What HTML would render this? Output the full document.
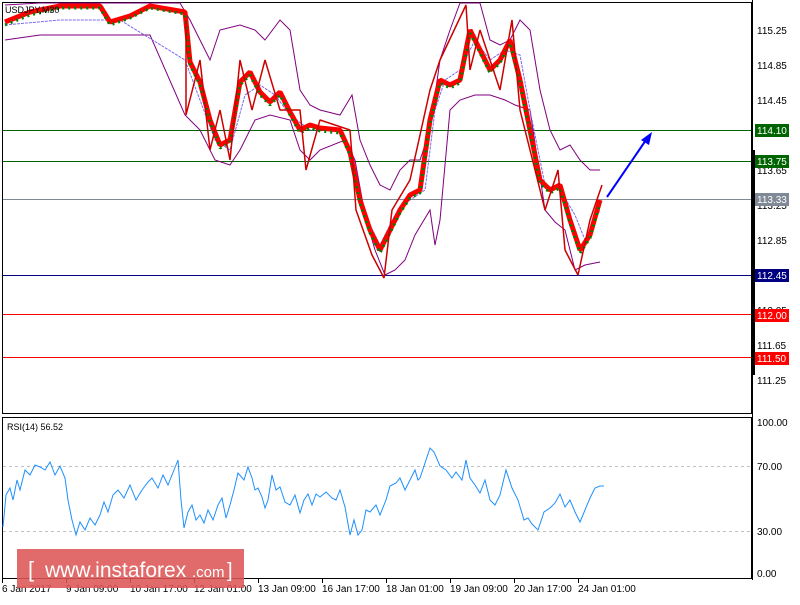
<!DOCTYPE html>
<html><head><meta charset="utf-8"><style>
body{margin:0;width:800px;height:600px;background:#fff;overflow:hidden;font-family:"Liberation Sans",sans-serif}
svg text{font-family:"Liberation Sans",sans-serif}
</style></head><body>
<svg width="800" height="600" viewBox="0 0 800 600" xmlns="http://www.w3.org/2000/svg">
<rect x="2.5" y="2.5" width="749" height="411" fill="#fff" stroke="#000"/>
<rect x="2.5" y="417.5" width="749" height="161" fill="#fff" stroke="#000"/>
<g shape-rendering="crispEdges">
<rect x="3" y="130" width="748" height="1" fill="#006400"/>
<rect x="3" y="161" width="748" height="1" fill="#006400"/>
<rect x="3" y="199" width="748" height="1" fill="#7f8a96"/>
<rect x="3" y="275" width="748" height="1" fill="#000080"/>
<rect x="3" y="314" width="748" height="1" fill="#ff0000"/>
<rect x="3" y="357" width="748" height="1" fill="#ff0000"/>
</g>
<polyline fill="none" stroke="#800080" points="5,5 40,3 100,3 150,3 180,3 190,20 200,40 210,60 220,30 240,25 255,30 265,40 280,20 290,30 300,90 310,105 320,110 340,115 352,95 360,140 370,165 380,185 390,190 400,170 410,160 420,160 430,130 440,60 450,30 460,3 480,3 490,40 500,45 510,40 520,20 530,30 540,90 550,130 560,150 570,145 580,160 590,170 600,170"/>
<polyline fill="none" stroke="#800080" points="5,40 40,35 100,35 150,35 185,115 200,130 215,160 230,165 240,150 255,120 270,115 290,120 300,150 310,160 320,150 345,140 355,160 365,215 375,250 385,275 395,270 405,260 415,235 430,210 435,245 440,220 450,110 460,100 475,95 490,95 505,100 515,105 530,110 545,210 555,222 565,230 575,270 585,265 600,262"/>
<polyline fill="none" stroke="#7b68ee" stroke-dasharray="3,1" points="5,25 60,20 120,20 185,60 200,100 215,140 230,150 245,95 260,85 275,95 290,115 310,130 340,130 355,170 365,215 380,245 395,215 410,200 425,190 435,110 445,80 460,70 475,40 490,60 505,50 520,55 530,110 545,185 560,190 575,215 585,240 600,210"/>
<g fill="none" stroke-linejoin="bevel">
<polyline stroke="#ff0000" stroke-width="5" points="5,22 30,12 60,6 100,6 110,22 130,16 150,6 185,12 190,62 200,82 210,120 220,145 230,140 240,82 250,72 260,92 270,102 280,92 290,112 300,130 310,125 320,128 340,130 350,152 360,200 370,230 380,250 390,230 400,210 410,195 420,190 430,120 440,80 450,85 460,80 470,30 480,50 490,70 500,60 510,40 520,80 530,130 540,180 550,190 560,185 570,220 580,250 590,235 600,200"/>
<polyline stroke="#008000" stroke-width="3" stroke-dasharray="2,4" points="5,25 30,15 60,8 100,8 110,25 130,18 150,8 185,14 190,65 200,85 210,122 220,148 230,143 240,85 250,75 260,95 270,105 280,95 290,115 300,133 310,128 320,131 340,133 350,155 360,203 370,233 380,253 390,233 400,213 410,198 420,193 430,123 440,83 450,88 460,83 470,33 480,53 490,73 500,63 510,43 520,83 530,133 540,183 550,193 560,188 570,223 580,253 590,238 600,203"/>
<polyline stroke="#cc0000" stroke-width="1.5" points="186,20 186,115 200,60 210,150 220,110 230,160 240,60 252,110 265,60 280,110 300,110 306,170 320,120 350,130 356,210 372,255 384,278 392,210 410,180 430,90 440,60 466,5 470,70 480,30 500,90 512,20 520,110 530,150 545,210 558,170 565,250 578,275 590,220 602,185"/>
</g>
<line x1="607" y1="197" x2="646" y2="140" stroke="#0000ff" stroke-width="2"/>
<polygon points="652,132 641,140 649,145" fill="#0000ff"/>
<line x1="3" y1="466.5" x2="751" y2="466.5" stroke="#c0c0c0" stroke-dasharray="3,3"/>
<line x1="3" y1="531.5" x2="751" y2="531.5" stroke="#c0c0c0" stroke-dasharray="3,3"/>
<polyline fill="none" stroke="#1e90ff" points="3,527 6,495 10,488 13,500 17,480 20,490 25,470 30,475 35,465 40,467 45,470 50,462 55,475 60,466 65,478 68,500 72,520 76,535 80,522 85,530 90,518 95,525 100,515 104,502 108,512 113,495 118,490 124,498 130,485 136,500 142,490 148,482 152,478 158,488 163,475 168,485 172,475 176,465 178,460 181,500 184,528 188,512 192,505 196,520 200,515 204,523 208,510 213,520 218,505 222,498 226,518 230,505 234,490 238,473 244,480 248,467 252,478 255,490 258,488 262,497 265,508 268,500 272,475 276,490 280,487 285,502 290,505 295,495 300,513 304,500 308,494 312,505 316,494 320,497 326,492 332,498 336,500 340,490 345,507 350,535 354,520 358,535 362,530 366,510 370,512 376,505 380,515 386,500 390,486 396,483 400,478 405,490 410,480 415,470 418,480 420,478 426,460 430,448 434,452 440,466 446,470 452,478 456,472 462,480 466,460 470,478 475,485 480,493 485,480 490,500 495,505 500,495 506,470 512,488 518,500 524,520 528,518 532,524 538,530 544,512 550,508 555,503 560,494 565,507 570,500 575,512 580,522 585,510 590,498 595,488 600,486 604,486"/>
<text x="7" y="430" font-size="9">RSI(14) 56.52</text>
<line x1="752.5" y1="0" x2="752.5" y2="580" stroke="#000"/>
<rect x="751" y="150" width="4" height="225" fill="#000"/>
<g font-size="10" fill="#000">
<text x="757" y="34">115.25</text><text x="757" y="69">114.85</text><text x="757" y="104">114.45</text>
<text x="757" y="174">113.65</text><text x="757" y="209">113.25</text><text x="757" y="244">112.85</text>
<text x="757" y="314">112.05</text><text x="757" y="349">111.65</text><text x="757" y="384">111.25</text>
<text x="757" y="426">100.00</text><text x="757" y="470">70.00</text><text x="757" y="535">30.00</text><text x="757" y="577">0.00</text>
</g>
<g font-size="10" fill="#fff">
<rect x="755" y="124" width="34" height="13" fill="#006400"/><text x="757" y="134">114.10</text>
<rect x="755" y="155" width="34" height="13" fill="#006400"/><text x="757" y="165">113.75</text>
<rect x="755" y="193" width="34" height="13" fill="#7f8a96"/><text x="757" y="203">113.33</text>
<rect x="755" y="269" width="34" height="13" fill="#000080"/><text x="757" y="279">112.45</text>
<rect x="755" y="309" width="34" height="13" fill="#ff0000"/><text x="757" y="319">112.00</text>
<rect x="755" y="352" width="34" height="13" fill="#ff0000"/><text x="757" y="362">111.50</text>
</g>
<text x="5" y="13" font-size="9">USDJPY,M30</text>
<g font-size="10" fill="#000">
<text x="2" y="592">6 Jan 2017</text><text x="66" y="592">9 Jan 09:00</text><text x="130" y="592">10 Jan 17:00</text>
<text x="194" y="592">12 Jan 01:00</text><text x="258" y="592">13 Jan 09:00</text><text x="322" y="592">16 Jan 17:00</text>
<text x="386" y="592">18 Jan 01:00</text><text x="450" y="592">19 Jan 09:00</text><text x="514" y="592">20 Jan 17:00</text>
<text x="578" y="592">24 Jan 01:00</text>
</g>
<g stroke="#000"><line x1="2.5" y1="579" x2="2.5" y2="583"/><line x1="66.5" y1="579" x2="66.5" y2="583"/><line x1="130.5" y1="579" x2="130.5" y2="583"/><line x1="194.5" y1="579" x2="194.5" y2="583"/><line x1="258.5" y1="579" x2="258.5" y2="583"/><line x1="322.5" y1="579" x2="322.5" y2="583"/><line x1="386.5" y1="579" x2="386.5" y2="583"/><line x1="450.5" y1="579" x2="450.5" y2="583"/><line x1="514.5" y1="579" x2="514.5" y2="583"/><line x1="578.5" y1="579" x2="578.5" y2="583"/></g>
<rect x="17" y="549" width="227" height="39" fill="#dd5555" opacity="0.88"/>
<text x="28" y="577" font-size="22" fill="#fff">[</text>
<text x="45" y="577" font-size="21" fill="#fff">www.instaforex</text>
<text x="192" y="577" font-size="15" fill="#fff">.com</text>
<text x="227" y="577" font-size="20" fill="#fff">]</text>
</svg>
</body></html>
